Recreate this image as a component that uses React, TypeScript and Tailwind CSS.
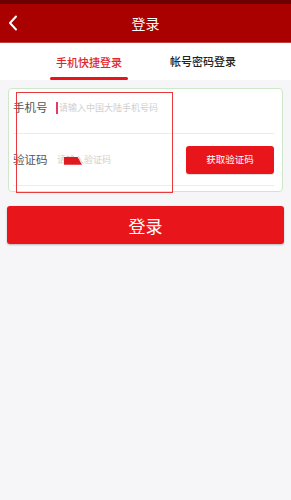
import React from "react";

export default function App() {
  const font = { fontFamily: '"Noto Sans CJK SC", "Noto Sans", sans-serif' };
  return (
    <div className="w-[291px] h-[500px] bg-[#f6f6f8] flex flex-col" style={font}>
      <div className="h-[4px] bg-[#6b0000]" />
      <div className="h-[39px] bg-[#a90000] flex items-center relative justify-center border-b border-[#c04040]">
        <svg className="absolute left-[8px] top-[11px]" width="10" height="16" viewBox="0 0 10 16">
          <path d="M8 1.5 L2 8 L8 14.5" stroke="#fff" strokeWidth="2" fill="none" strokeLinecap="round" strokeLinejoin="round" />
        </svg>
        <span className="text-white text-[14px] leading-none">登录</span>
      </div>
      <div className="h-[37px] bg-white flex">
        <div className="w-[145px] flex justify-end">
          <div className="w-[78px] mr-[17px] flex flex-col items-center justify-end">
            <span className="text-[#e2262b] text-[11px] leading-none font-medium mb-[9px]">手机快捷登录</span>
            <div className="h-[3px] w-full bg-[#e8141a] rounded-full" />
          </div>
        </div>
        <div className="flex-1 flex items-center pl-[25px] pb-[1px]">
          <span className="text-[#222] text-[11px] leading-none font-medium">帐号密码登录</span>
        </div>
      </div>
      <div className="px-[8px] pt-[8px]">
        <div className="relative bg-white border border-[#cfe8c9] rounded-[4px] h-[104px] px-[4px]">
          <div className="h-[45px] flex items-center pb-[6px] border-b border-[#ececec] mr-[4px]">
            <span className="text-[#555] text-[11.5px] w-[43px]">手机号</span>
            <div className="w-[2px] h-[12px] bg-[#e83a6a] mr-[1px]" />
            <span className="text-[#cfcfcf] text-[9px]">请输入中国大陆手机号码</span>
          </div>
          <div className="h-[52px] flex items-center border-b border-[#ececec] mr-[4px]">
            <span className="text-[#555] text-[11.5px] w-[44px]">验证码</span>
            <span className="text-[#cfcfcf] text-[9px] relative">
              请输入验证码
              <span className="absolute left-[7px] top-[4px] w-[18px] h-[8px] bg-[#e01a1f]" style={{ clipPath: "polygon(0 0, 75% 0, 100% 100%, 0 100%)" }} />
            </span>
            <div className="ml-auto w-[88px] h-[28px] bg-[#e8151b] rounded-[3px] flex items-center justify-center shadow-[0_1px_1px_rgba(0,0,0,0.15)]">
              <span className="text-white text-[9.5px]">获取验证码</span>
            </div>
          </div>
          <div className="absolute left-[7px] top-[3px] w-[157px] h-[101px] border border-[#e8393c]" />
        </div>
      </div>
      <div className="px-[7px] pt-[14px]">
        <div className="h-[38px] bg-[#e8151b] rounded-[3px] flex items-center justify-center shadow-[0_1px_2px_rgba(0,0,0,0.25)]">
          <span className="text-white text-[17px] leading-none">登录</span>
        </div>
      </div>
    </div>
  );
}
